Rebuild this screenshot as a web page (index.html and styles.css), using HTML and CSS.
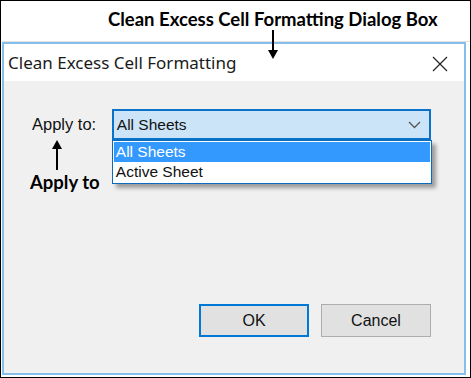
FILE: index.html
```html
<!DOCTYPE html>
<html lang="en">
<head>
  <meta charset="UTF-8" />
  <title>Clean Excess Cell Formatting</title>
  <link rel="stylesheet" href="styles.css">
</head>
<body>
  <div class="frame">
    <div class="caption">Clean Excess Cell Formatting Dialog Box</div>

    <div class="dialog">
      <div class="titlebar">
        <span class="title">Clean Excess Cell Formatting</span>
        <svg class="close" width="16" height="16" viewBox="0 0 16 16">
          <path d="M1 1 L15 15 M15 1 L1 15" stroke="#222" stroke-width="1.2" fill="none" />
        </svg>
      </div>

      <div class="content">
        <div class="field">
          <span class="label">Apply to:</span>
          <div class="combo">
            <span>All Sheets</span>
            <svg width="13" height="8" viewBox="0 0 13 8">
              <path d="M1 1 L6.5 6.5 L12 1" stroke="#555" stroke-width="1.3" fill="none" />
            </svg>
            <ul class="options">
              <li class="selected">All Sheets</li>
              <li>Active Sheet</li>
            </ul>
          </div>
        </div>

        <div class="buttons">
          <button class="btn default">OK</button>
          <button class="btn">Cancel</button>
        </div>
      </div>
    </div>

    <!-- annotation arrows -->
    <div class="arrow down"></div>
    <div class="arrow up"></div>
    <div class="note">Apply to</div>
  </div>
</body>
</html>
```

FILE: styles.css
```css
body {
  margin: 0;
  background: #fff;
}

.frame {
  position: relative;
  width: 471px;
  height: 378px;
  box-sizing: border-box;
  border: 1px solid #000;
  background: #fff;
  padding-left: 1px;
}

.caption {
  height: 41px;
  padding-left: 106px;
  box-sizing: border-box;
  padding-top: 7px;
  font-family: Lato, "Liberation Sans", sans-serif;
  font-weight: bold;
  font-size: 18.5px;
  color: #000;
  border-bottom: 1px solid #e2e2e2;
}

.dialog {
  width: 464px;
  height: 333px;
  box-sizing: border-box;
  border: 2px solid #84c0ea;
  display: flex;
  flex-direction: column;
}

.titlebar {
  height: 37px;
  background: #fff;
  display: flex;
  align-items: center;
  justify-content: space-between;
  padding: 0 16px 0 4px;
}

.title {
  font-family: "Noto Sans", sans-serif;
  font-size: 17px;
  color: #1a1a1a;
}

.close {
  margin-top: 2px;
}

.content {
  flex: 1;
  background: #f0f0f0;
  display: flex;
  flex-direction: column;
  justify-content: space-between;
  padding: 28px 33px 36px 28px;
}

.field {
  display: flex;
  align-items: flex-start;
  font-family: "Liberation Sans", Arial, sans-serif;
  font-size: 15.5px;
  color: #111;
}

.label {
  width: 80px;
  padding-top: 6px;
  font-size: 16.5px;
}

.combo {
  position: relative;
  width: 320px;
  height: 31px;
  box-sizing: border-box;
  border: 2px solid #0a72c8;
  background: #cce4f7;
  display: flex;
  align-items: center;
  justify-content: space-between;
  padding: 0 8px 0 3px;
}

.options {
  position: absolute;
  left: -2px;
  top: 29px;
  width: 320px;
  box-sizing: border-box;
  margin: 0;
  padding: 1px;
  list-style: none;
  background: #fff;
  border: 1px solid #0a6cc0;
  box-shadow: 4px 4px 4px rgba(0, 0, 0, 0.35);
}

.options li {
  height: 20px;
  line-height: 20px;
  padding-left: 2px;
}

.options .selected {
  background: #3399ff;
  color: #fff;
}

.buttons {
  display: flex;
  justify-content: flex-end;
  gap: 12px;
}

.btn {
  width: 110px;
  height: 33px;
  box-sizing: border-box;
  background: #e1e1e1;
  border: 1px solid #adadad;
  font-family: "Liberation Sans", Arial, sans-serif;
  font-size: 16px;
  color: #111;
}

.btn.default {
  border: 2px solid #0078d7;
}

.arrow {
  position: absolute;
  width: 2px;
  background: #000;
}

.arrow.down {
  left: 271px;
  top: 29px;
  height: 27px;
}

.arrow.down::after,
.arrow.up::after {
  content: "";
  position: absolute;
  left: -4px;
  border-left: 5px solid transparent;
  border-right: 5px solid transparent;
}

.arrow.down::after {
  bottom: -2px;
  border-top: 9px solid #000;
}

.arrow.up {
  left: 55px;
  top: 141px;
  height: 28px;
}

.arrow.up::after {
  top: -2px;
  border-bottom: 9px solid #000;
}

.note {
  position: absolute;
  left: 29px;
  top: 170px;
  font-family: Lato, "Liberation Sans", sans-serif;
  font-weight: bold;
  font-size: 18.5px;
}
```
